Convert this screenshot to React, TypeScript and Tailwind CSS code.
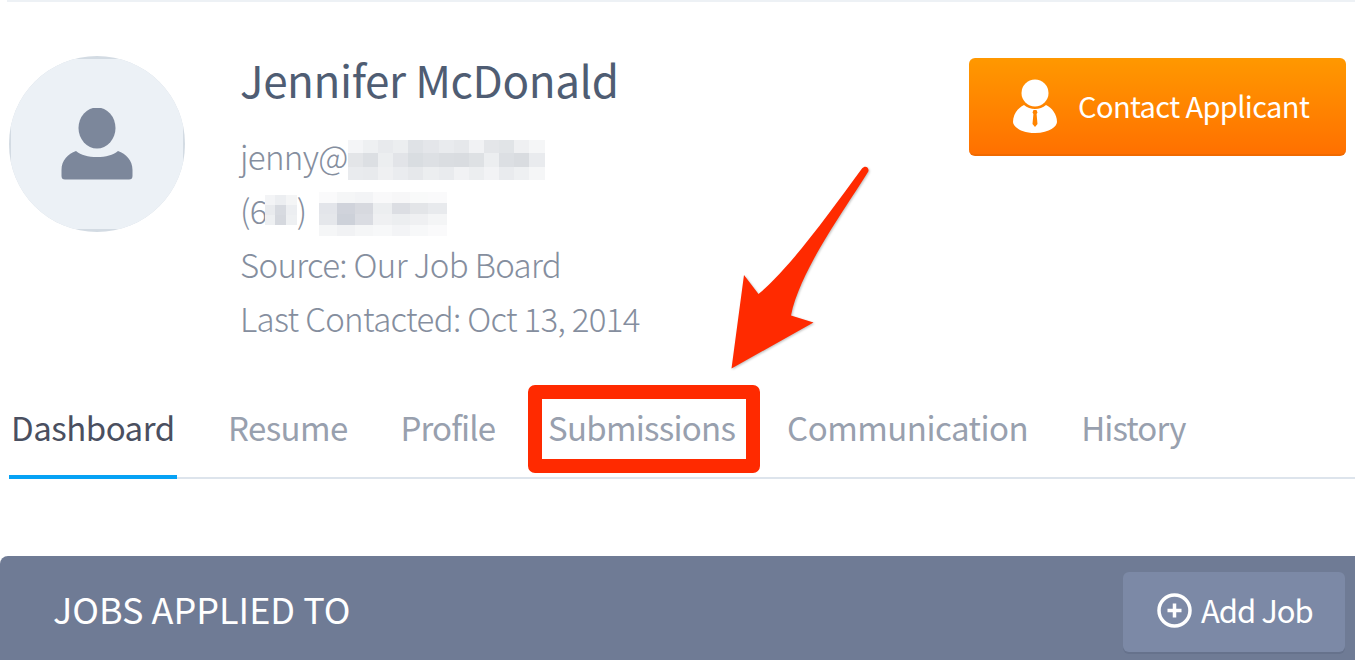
const F = { fontFamily: '"Noto Sans CJK SC", "Noto Sans CJK JP", "Open Sans", sans-serif' };

const emailCells = [
  "#f4f5f7","#eef0f2","#e8eaed","#eceef0","#dfe2e6","#e4e6ea","#e9ebee","#e6e8eb","#f1f2f4","#e4e6e9","#e1e4e7","#eff0f2","#f5f6f7",
  "#e3e5e8","#dcdfe3","#eceef0","#e2e4e8","#d9dde1","#dde0e4","#dadde1","#d9dce0","#dee1e4","#eceef0","#dcdfe3","#d9dce0","#e9ebee",
  "#e9ebee","#e8eaed","#eff0f2","#eaecef","#e6e8eb","#eceef0","#e9ebee","#f1f2f4","#eceef0","#f2f3f5","#e9ebee","#eef0f2","#f5f6f7",
];
const phoneCells = [
  "#fafafb","#f5f6f7","#f3f4f6","#f9f9fa","#f7f7f8","#f9fafa","#fafafb",
  "#e3e5ea","#d0d3db","#d7d9df","#eceef0","#dcdee3","#e3e5e8","#e8eaed",
  "#e5e7eb","#cdd1d9","#dadce2","#eff0f2","#eceef0","#eff0f2","#f4f5f6",
  "#f5f6f7","#f1f2f4","#f5f6f7","#f7f8f9","#f3f4f6","#f7f8f9","#fafafb",
];
const areaCells = ["#f3f4f6","#eceef1","#f4f5f6","#e9ebee","#d7dae0","#eceef1","#eef0f2","#d5d8de","#eef0f2"];

function Mosaic({ cells, cols, className }: { cells: string[]; cols: number; className: string }) {
  return (
    <span className={`inline-grid align-middle blur-[0.6px] ${className}`} style={{ gridTemplateColumns: `repeat(${cols}, 1fr)` }}>
      {cells.map((c, i) => (
        <span key={i} style={{ background: c }} />
      ))}
    </span>
  );
}

function Tab({ label, active, className }: { label: string; active?: boolean; className: string }) {
  return (
    <div
      className={`h-[98px] -mb-[2px] flex items-center text-[33px] border-b-[4px] ${active ? "text-[#4a4f60] border-[#06a2f5]" : "text-[#98a0ae] border-transparent"} ${className}`}
    >
      {label}
    </div>
  );
}

export default function App() {
  return (
    <div className="relative w-[1355px] h-[660px] overflow-hidden bg-white" style={F}>
      <div className="h-[2px] ml-[7px] bg-[#edf1f5]" />

      <div className="flex h-[377px] pt-[54px] pl-[9px] pr-[9px]">
        <div className="w-[176px] h-[176px] rounded-full bg-[#d3dbe3] overflow-hidden flex items-center justify-center shrink-0">
          <div className="w-[172px] h-[170px] shrink-0 bg-[#ecf1f6] flex items-center justify-center">
            <svg width="72" height="72" viewBox="0 0 72 72" fill="#7c879b">
              <ellipse cx="36" cy="20" rx="18.5" ry="20.5" />
              <path d="M15 43 C20 47 27 49 36 49 C45 49 52 47 57 43 C65 46 71.500 52 71.500 62 V68 Q71.500 71.500 68 71.500 H4 Q0.500 71.500 0.500 68 V62 C0.500 52 7 46 15 43 Z" />
            </svg>
          </div>
        </div>

        <div className="ml-[55px] flex-1 -mt-[7px]">
          <div className="h-[60px] leading-[60px] text-[44px] text-[#4f5d73] tracking-[-0.4px]">Jennifer McDonald</div>
          <div className="mt-[20px] font-light text-[33px] leading-[54px] tracking-[-0.65px] text-[#858e9e]">
            <div className="h-[54px] flex items-center">
              <span>jenny@</span>
              <Mosaic cells={emailCells} cols={13} className="w-[197px] h-[40px] mt-[8px]" />
            </div>
            <div className="h-[54px] flex items-center">
              <span>(6</span>
              <Mosaic cells={areaCells} cols={3} className="w-[32px] h-[30px] -ml-[2px]" />
              <span>)</span>
              <Mosaic cells={phoneCells} cols={7} className="w-[128px] h-[44px] ml-[12px] mt-[8px]" />
            </div>
            <div className="h-[54px]">Source: Our Job Board</div>
            <div className="h-[54px]">Last Contacted: Oct 13, 2014</div>
          </div>
        </div>

        <button className="mt-[2px] w-[377px] h-[98px] shrink-0 rounded-[6px] bg-gradient-to-b from-[#ff9800] to-[#ff7000] border-b-2 border-[#f06a00] flex items-center pl-[44px] text-white text-[29px] tracking-[-0.6px]">
          <svg width="44" height="54" viewBox="0 0 44 54" fill="#fff" className="shrink-0">
            <circle cx="22" cy="14" r="13.500" />
            <path d="M11 26 C14 28.500 18 30 22 30 C26 30 30 28.500 33 26 C39 29 44 35 44 43 C44 47 37 54 22 54 C7 54 0 47 0 43 C0 35 5 29 11 26 Z" />
            <path d="M20.500 31 H23.500 L24.500 33.500 L23.600 35 L24.500 45 L22 48 L19.500 45 L20.400 35 L19.500 33.500 Z" fill="#ff8400" />
          </svg>
          <span className="ml-[21px]">Contact Applicant</span>
        </button>
      </div>

      <div className="flex h-[100px] ml-[9px] items-end border-b-2 border-[#dde4ec]">
        <Tab label="Dashboard" active className="w-[168px] pl-[2px] tracking-[-0.5px]" />
        <Tab label="Resume" className="ml-[51px] tracking-[-0.6px]" />
        <Tab label="Profile" className="ml-[53px] tracking-[-0.9px]" />
        <Tab label="Submissions" className="ml-[53px] tracking-[-0.75px]" />
        <Tab label="Communication" className="ml-[52px] tracking-[-0.5px]" />
        <Tab label="History" className="ml-[53px] tracking-[-0.9px]" />
      </div>

      <div className="mt-[77px] h-[104px] rounded-tl-[8px] bg-[#6f7b95] flex pl-[53px] pr-[10px] pt-[16px] items-start">
        <div className="flex-1 text-white text-[36px] leading-[46px] mt-[13px]">JOBS APPLIED TO</div>
        <button className="w-[222px] h-[80px] rounded-[6px] bg-[#7c89a6] shadow-[0_2px_0_#66728c] flex items-center pl-[34px] pb-[3px] text-white text-[31px] tracking-[-1px]">
          <svg width="35" height="35" viewBox="0 0 35 35" fill="none" stroke="#fff" strokeWidth="3.500" className="shrink-0">
            <circle cx="17.500" cy="17.500" r="15.500" />
            <path d="M17.500 10.500 V24.500 M10.500 17.500 H24.500" />
          </svg>
          <span className="ml-[9px]">Add Job</span>
        </button>
      </div>

      <div className="absolute left-[528px] top-[385px] w-[232px] h-[88px] border-[14px] border-[#ff2a00] rounded-[7px]" />
      <svg className="absolute left-[720px] top-[155px] drop-shadow-[1px_1px_1px_rgba(0,0,0,0.25)]" width="160" height="225" viewBox="720 155 160 225">
        <path
          d="M862 168.500 C866 164 870 169 868 172 C846 208 800 270 791 315.500 L813.500 322.500 L731.500 368.500 L744 275 L758.500 294 C790 268 830 212 862 168.500 Z"
          fill="#ff2a00"
        />
      </svg>
    </div>
  );
}
